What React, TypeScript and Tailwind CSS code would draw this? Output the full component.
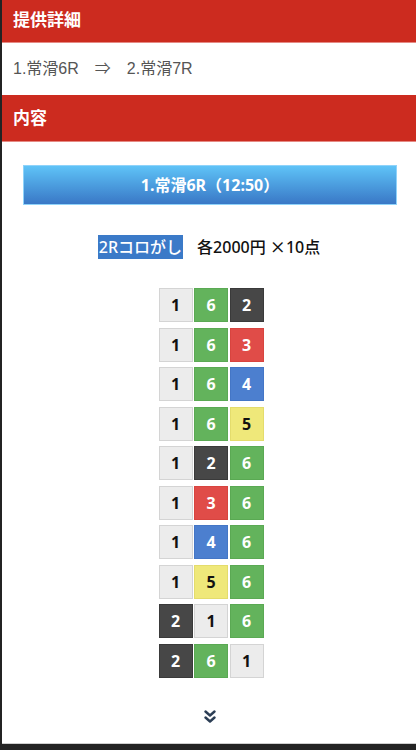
const rows: [number, number, number][] = [
  [1, 6, 2],
  [1, 6, 3],
  [1, 6, 4],
  [1, 6, 5],
  [1, 2, 6],
  [1, 3, 6],
  [1, 4, 6],
  [1, 5, 6],
  [2, 1, 6],
  [2, 6, 1],
]

const cellColor: Record<number, string> = {
  1: 'bg-[#ececec] text-[#111] border-[#d4d4d4]',
  2: 'bg-[#474747] text-white border-[#3a3a3a]',
  3: 'bg-[#e04c48] text-white border-[#d8443f]',
  4: 'bg-[#4c7fcf] text-white border-[#4476c6]',
  5: 'bg-[#efe87a] text-[#111] border-[#e4dc6c]',
  6: 'bg-[#63b35c] text-white border-[#5aa953]',
}

function Cell({ n }: { n: number }) {
  return (
    <div className={`w-[34px] h-[34px] border flex items-center justify-center text-[16px] font-bold ${cellColor[n]}`}>
      {n}
    </div>
  )
}

export default function App() {
  return (
    <div className="w-[416px] h-[750px] bg-[#232323] font-['Noto_Sans','Noto_Sans_CJK_JP',sans-serif]">
      <div className="h-[744px] ml-[2px] bg-white border-b border-[#cfcfcf] flex flex-col">
        <div className="h-[43px] bg-[#cc2b1f] border-b border-[#e58a84] flex items-center px-[11px]">
          <h2 className="text-white font-bold text-[17px] leading-none -mt-[3px]">提供詳細</h2>
        </div>
        <div className="h-[52px] flex items-center px-[11px] text-[#555] text-[16px] font-['Liberation_Sans','Noto_Sans_CJK_JP',sans-serif]">
          <span>1.常滑6R</span>
          <span className="mx-[16px]">⇒</span>
          <span>2.常滑7R</span>
        </div>
        <div className="h-[47px] bg-[#cc2b1f] border-b border-[#e58a84] flex items-center px-[11px]">
          <h2 className="text-white font-bold text-[17px] leading-none -mt-[2px]">内容</h2>
        </div>

        <div className="pl-[21px] pr-[19px] pt-[23px]">
          <div className="h-[40px] bg-gradient-to-b from-[#5fc3f7] to-[#3a78c6] border border-[#8fd3fa] flex items-center justify-center text-white font-bold text-[16px]">
            1.常滑6R（12:50）
          </div>
        </div>

        <div className="flex items-center justify-center mt-[29px] text-[16px] text-[#111] font-medium">
          <span className="bg-[#3b7ac8] text-white px-[1px] leading-[24px]">2Rコロがし</span>
          <span className="ml-[14px]">
            各2000円 <span className="font-['Noto_Sans_CJK_JP',sans-serif]">×</span>10点
          </span>
        </div>

        <div className="flex flex-col items-center gap-[5.5px] mt-[29px] ml-[4px]">
          {rows.map((r, i) => (
            <div key={i} className="flex gap-[1.5px]">
              {r.map((n, j) => (
                <Cell key={j} n={n} />
              ))}
            </div>
          ))}
        </div>

        <div className="flex justify-center mt-[31px] ml-[2px]">
          <svg width="12" height="16" viewBox="0 0 12 16" fill="none" stroke="#2c3e55" strokeWidth="2.4" strokeLinecap="round" strokeLinejoin="round">
            <path d="M1.5 2.5l4.5 4 4.5-4" />
            <path d="M1.5 8.5l4.5 4 4.5-4" />
          </svg>
        </div>
      </div>
    </div>
  )
}
